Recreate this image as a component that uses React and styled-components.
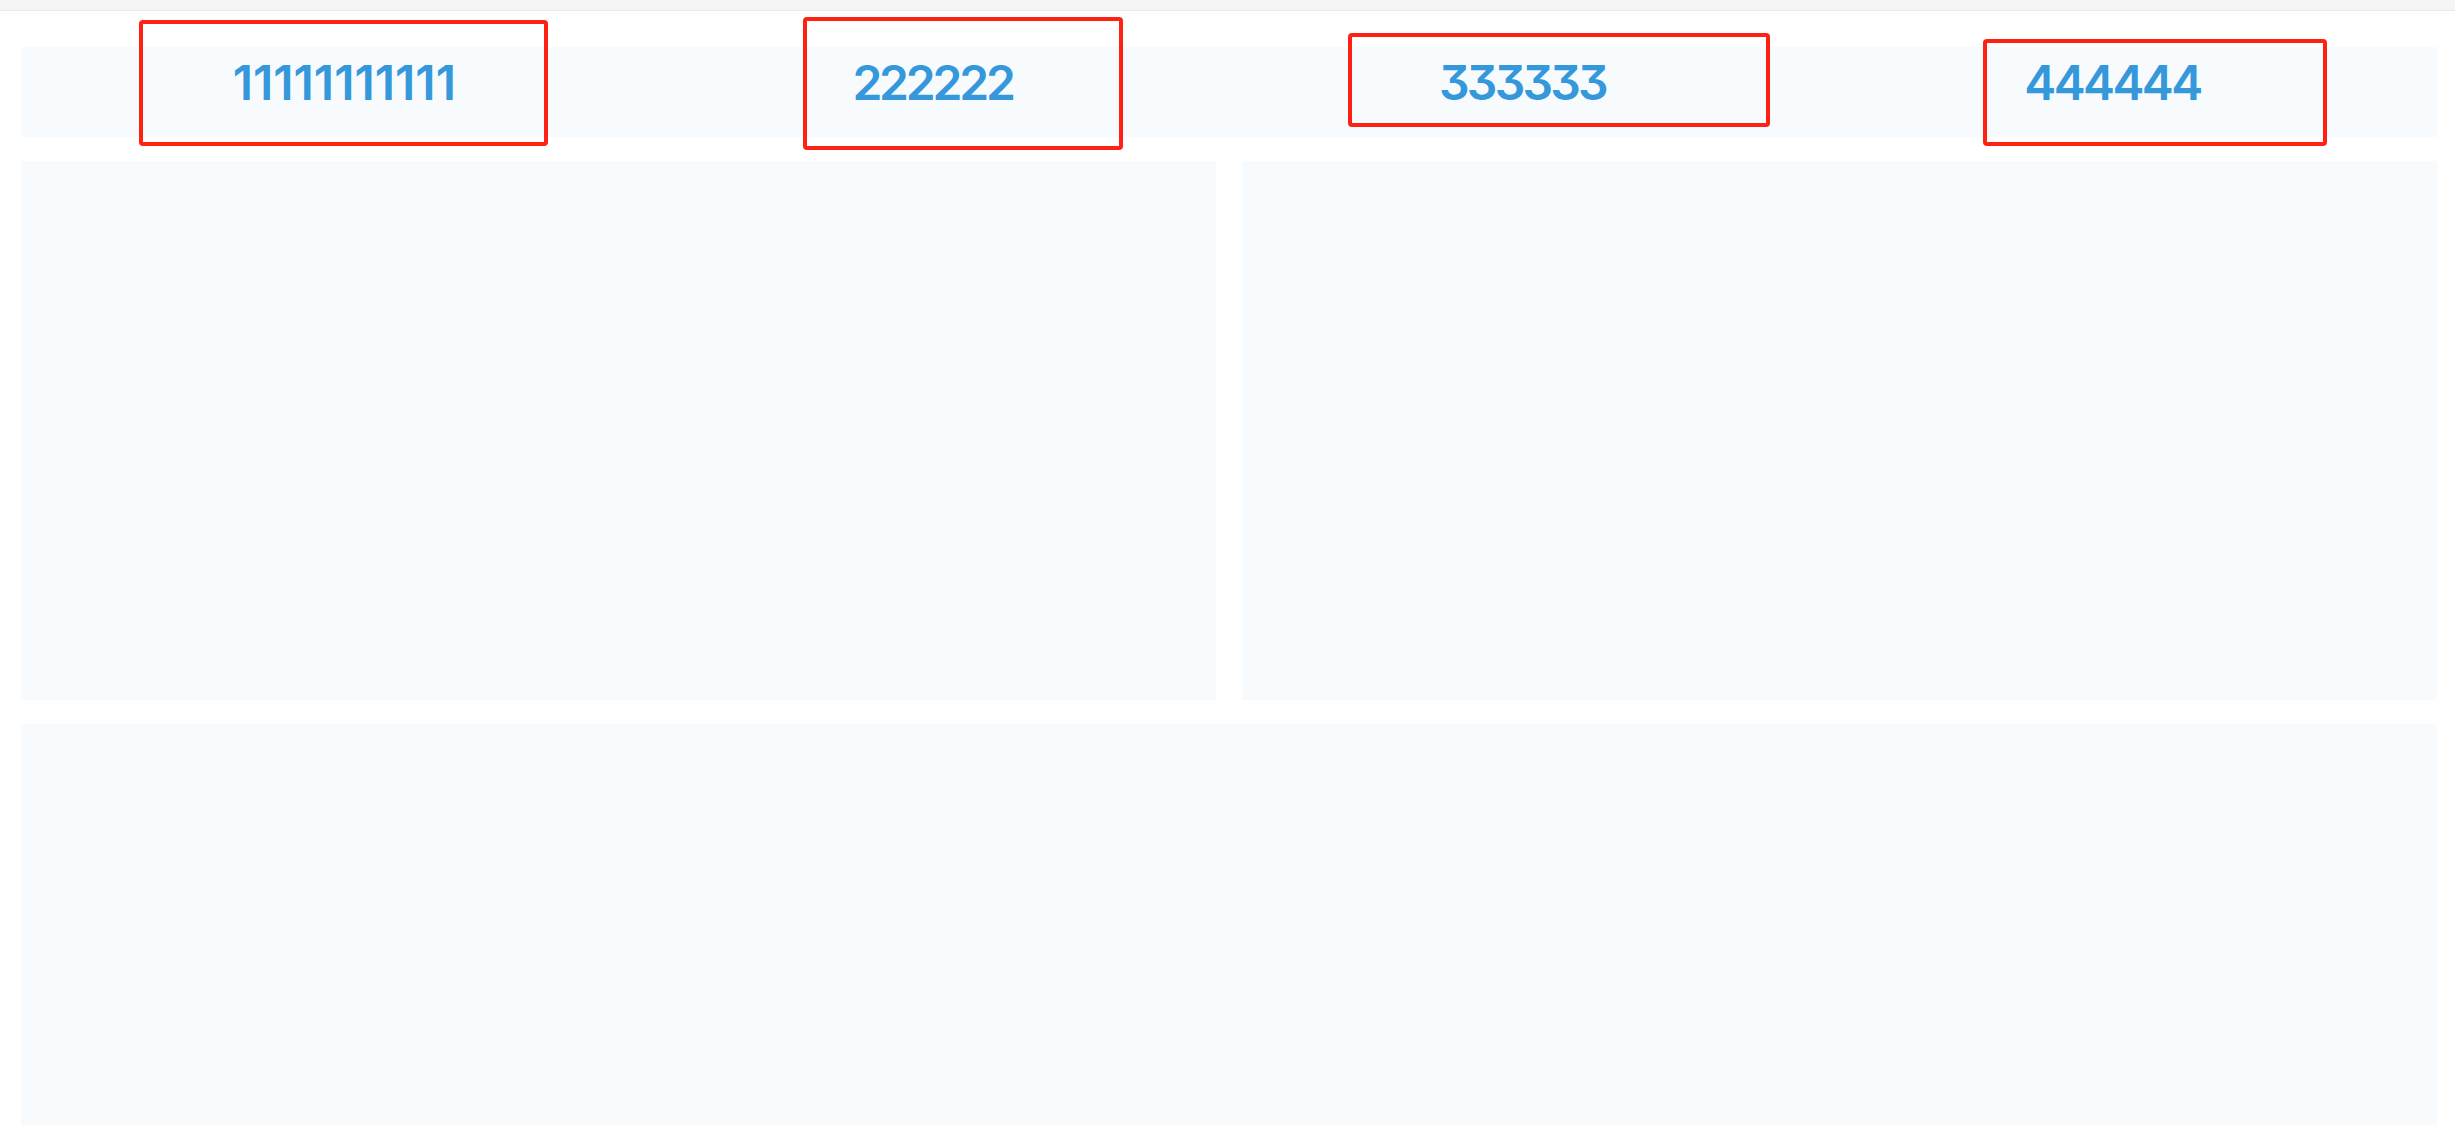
import React from 'react';
import styled, { createGlobalStyle } from 'styled-components';

const GlobalStyle = createGlobalStyle`
  html, body {
    margin: 0;
    padding: 0;
    background: #ffffff;
    font-family: Inter, Roboto, "Noto Sans", sans-serif;
  }
  body {
    overflow: hidden;
  }
`;

const Page = styled.div`
  position: relative;
  min-height: 100vh;
`;

const TopBar = styled.div`
  height: 10px;
  background: #f5f5f5;
  border-bottom: 1px solid #e9e9e9;
`;

const Content = styled.div`
  display: flex;
  flex-direction: column;
  gap: 24px;
  padding: 36px 18px 0 21px;
`;

const Panel = styled.div`
  background: #f7fbfe;
  height: ${({ height }) => height}px;
`;

const StatsPanel = styled(Panel)`
  display: flex;
  justify-content: space-evenly;
  align-items: flex-start;
  padding-top: 6px;
  box-sizing: border-box;
`;

const Stat = styled.div`
  width: 533px;
  text-align: center;
  font-size: 48px;
  font-weight: 600;
  line-height: 60px;
  color: #3498db;
  font-feature-settings: 'cv09' 1;
  letter-spacing: ${({ spacing }) => spacing}px;
  text-indent: ${({ spacing }) => spacing}px;
`;

const ChartRow = styled.div`
  display: grid;
  grid-template-columns: 1fr 1fr;
  gap: 26px;
`;

const Marker = styled.div`
  position: absolute;
  box-sizing: border-box;
  border: 4px solid #ff2113;
  border-radius: 4px;
  pointer-events: none;
`;

const stats = [
  { value: '11111111111', spacing: 0 },
  { value: '222222', spacing: -3.2 },
  { value: '333333', spacing: -2.8 },
  { value: '444444', spacing: -2.6 },
];

const markers = [
  { left: 139, top: 20, width: 409, height: 126 },
  { left: 803, top: 17, width: 320, height: 133 },
  { left: 1348, top: 33, width: 422, height: 94 },
  { left: 1983, top: 39, width: 344, height: 107 },
];

const App = () => (
  <Page>
    <GlobalStyle />
    <TopBar />
    <Content>
      <StatsPanel height={90}>
        {stats.map((s) => (
          <Stat key={s.value} spacing={s.spacing}>
            {s.value}
          </Stat>
        ))}
      </StatsPanel>
      <ChartRow>
        <Panel height={539} />
        <Panel height={539} />
      </ChartRow>
      <Panel height={420} />
    </Content>
    {markers.map((m, i) => (
      <Marker key={i} style={m} />
    ))}
  </Page>
);

export default App;
